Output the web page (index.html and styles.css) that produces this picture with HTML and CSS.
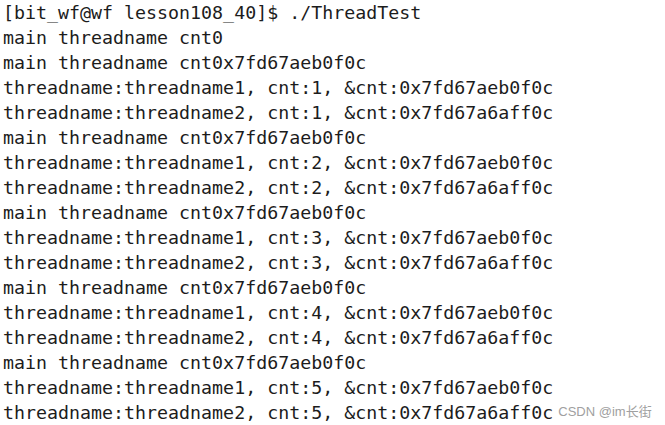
FILE: index.html
```html
<!DOCTYPE html>
<html>
<head>
<meta charset="utf-8">
<link rel="stylesheet" href="styles.css">
</head>
<body>
<div class="term">
<div class="line">[bit_wf@wf lesson108_40]$ ./ThreadTest</div>
<div class="line">main threadname cnt0</div>
<div class="line">main threadname cnt0x7fd67aeb0f0c</div>
<div class="line">threadname:threadname1, cnt:1, &amp;cnt:0x7fd67aeb0f0c</div>
<div class="line">threadname:threadname2, cnt:1, &amp;cnt:0x7fd67a6aff0c</div>
<div class="line">main threadname cnt0x7fd67aeb0f0c</div>
<div class="line">threadname:threadname1, cnt:2, &amp;cnt:0x7fd67aeb0f0c</div>
<div class="line">threadname:threadname2, cnt:2, &amp;cnt:0x7fd67a6aff0c</div>
<div class="line">main threadname cnt0x7fd67aeb0f0c</div>
<div class="line">threadname:threadname1, cnt:3, &amp;cnt:0x7fd67aeb0f0c</div>
<div class="line">threadname:threadname2, cnt:3, &amp;cnt:0x7fd67a6aff0c</div>
<div class="line">main threadname cnt0x7fd67aeb0f0c</div>
<div class="line">threadname:threadname1, cnt:4, &amp;cnt:0x7fd67aeb0f0c</div>
<div class="line">threadname:threadname2, cnt:4, &amp;cnt:0x7fd67a6aff0c</div>
<div class="line">main threadname cnt0x7fd67aeb0f0c</div>
<div class="line">threadname:threadname1, cnt:5, &amp;cnt:0x7fd67aeb0f0c</div>
<div class="line last"><span>threadname:threadname2, cnt:5, &amp;cnt:0x7fd67a6aff0c</span><span class="mark">CSDN @im长街</span></div>
</div>
</body>
</html>
```
FILE: styles.css
```css
html, body {
  margin: 0;
  padding: 0;
  background: #ffffff;
}
.term {
  padding: 0 0 0 3px;
  font-family: "DejaVu Sans Mono", monospace;
  font-size: 18.3px;
  line-height: 25px;
  color: #1c1c1c;
}
.line {
  height: 25px;
  white-space: pre;
}
.last {
  display: flex;
  align-items: baseline;
}
.mark {
  margin-left: 5px;
  position: relative;
  top: -3px;
  font-family: "Liberation Sans", "Noto Sans CJK SC", sans-serif;
  font-size: 13px;
  color: #a0a0a0;
}
```
